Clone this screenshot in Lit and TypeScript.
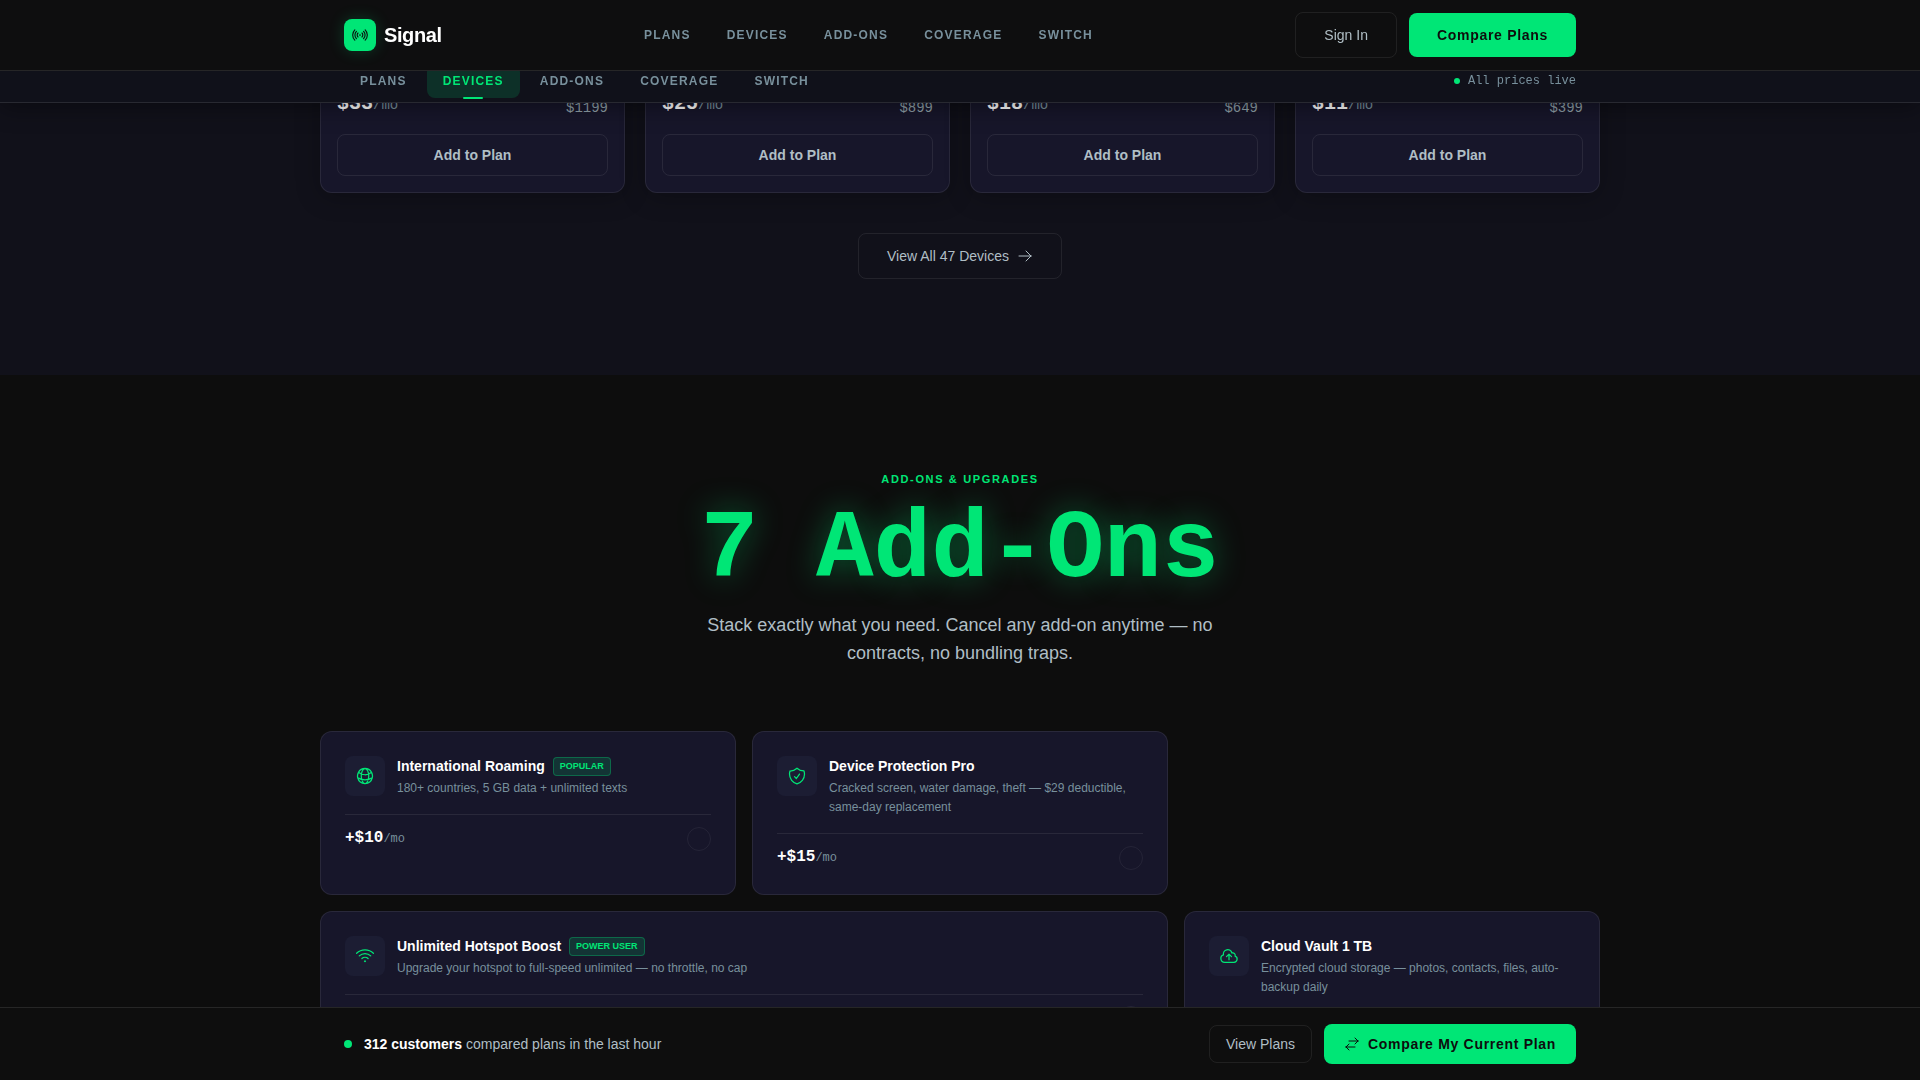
import { LitElement, html, css, svg, nothing } from "lit";
import { customElement, property, state } from "lit/decorators.js";
import { classMap } from "lit/directives/class-map.js";

const ICONS: Record<string, string> = {
  signal:
    "M9.348 14.652a3.75 3.75 0 010-5.304m5.304 0a3.75 3.75 0 010 5.304m-7.425 2.121a6.75 6.75 0 010-9.546m9.546 0a6.75 6.75 0 010 9.546M5.106 18.894c-3.808-3.807-3.808-9.98 0-13.788m13.788 0c3.808 3.807 3.808 9.98 0 13.788M12 12h.008v.008H12V12zm.375 0a.375.375 0 11-.75 0 .375.375 0 01.75 0z",
  arrow: "M13.5 4.5L21 12m0 0l-7.5 7.5M21 12H3",
  swap: "M7.5 21L3 16.5m0 0L7.5 12M3 16.5h13.5m0-13.5L21 7.5m0 0L16.5 12M21 7.5H7.5",
  globe:
    "M12 21a9.004 9.004 0 008.716-6.747M12 21a9.004 9.004 0 01-8.716-6.747M12 21c2.485 0 4.5-4.03 4.5-9S14.485 3 12 3m0 18c-2.485 0-4.5-4.03-4.5-9S9.515 3 12 3m0 0a8.997 8.997 0 017.843 4.582M12 3a8.997 8.997 0 00-7.843 4.582m15.686 0A11.953 11.953 0 0112 10.5c-2.998 0-5.74-1.1-7.843-2.918m15.686 0A8.959 8.959 0 0121 12c0 .778-.099 1.533-.284 2.253m0 0A17.919 17.919 0 0112 16.5c-3.162 0-6.133-.815-8.716-2.247m0 0A9.015 9.015 0 013 12c0-1.605.42-3.113 1.157-4.418",
  shield:
    "M9 12.75L11.25 15 15 9.75m-3-7.036A11.959 11.959 0 013.598 6 11.99 11.99 0 003 9.749c0 5.592 3.824 10.29 9 11.623 5.176-1.332 9-6.03 9-11.622 0-1.31-.21-2.571-.598-3.751h-.152c-3.196 0-6.1-1.248-8.25-3.285z",
  wifi:
    "M8.288 15.038a5.25 5.25 0 017.424 0M5.106 11.856c3.807-3.808 9.98-3.808 13.788 0M1.924 8.674c5.565-5.565 14.587-5.565 20.152 0M12.53 18.22l-.53.53-.53-.53a.75.75 0 011.06 0z",
  cloud:
    "M12 16.5V9.75m0 0l3 3m-3-3l-3 3M6.75 19.5a4.5 4.5 0 01-1.41-8.775 5.25 5.25 0 0110.233-2.33 3 3 0 013.758 3.848A3.752 3.752 0 0118 19.5H6.75z",
};

const icon = (name: string, size: number) => html`<svg
  width=${size}
  height=${size}
  viewBox="0 0 24 24"
  fill="none"
  stroke="currentColor"
  stroke-width="1.5"
  stroke-linecap="round"
  stroke-linejoin="round"
  aria-hidden="true"
>${svg`<path d=${ICONS[name]}></path>`}</svg>`;

const base = css`
  * {
    box-sizing: border-box;
    margin: 0;
  }
  svg {
    display: block;
    flex: none;
  }
  a {
    color: inherit;
    text-decoration: none;
  }
  button {
    font: inherit;
    cursor: pointer;
  }
  .mono {
    font-family: "Liberation Mono", monospace;
  }
  .btn {
    display: inline-flex;
    align-items: center;
    justify-content: center;
    gap: 8px;
    border-radius: 8px;
    font-size: 14px;
    line-height: 22px;
    white-space: nowrap;
  }
  .ghost {
    padding: 11px 28px;
    border: 1px solid rgba(255, 255, 255, 0.08);
    background: transparent;
    color: #b0bec5;
  }
  .primary {
    padding: 11px 28px;
    border: 0;
    background: #00e676;
    color: #0d0d0d;
    font-weight: 700;
    letter-spacing: 0.05em;
  }
`;

const SECTIONS = ["Plans", "Devices", "Add-Ons", "Coverage", "Switch"];

@customElement("device-card")
class DeviceCard extends LitElement {
  @property() monthly = "";
  @property() full = "";

  static styles = [
    base,
    css`
      :host {
        display: block;
      }
      .card {
        display: flex;
        flex-direction: column;
        gap: 13px;
        padding: 16px;
        border: 1px solid rgba(255, 255, 255, 0.08);
        border-radius: 12px;
        background: #17162a;
        box-shadow: 0 4px 24px rgba(0, 0, 0, 0.25);
      }
      .prices {
        display: flex;
        align-items: flex-end;
        justify-content: space-between;
      }
      .monthly {
        font-size: 20px;
        line-height: 32px;
        font-weight: 700;
        color: #fff;
      }
      .unit,
      .full {
        font-size: 14px;
        font-weight: 400;
        color: #78909c;
      }
      .full {
        line-height: 26px;
        color: #90a0a8;
      }
      .add {
        padding: 9px 16px;
        border: 1px solid rgba(255, 255, 255, 0.08);
        background: transparent;
        color: #b0bec5;
        font-weight: 700;
      }
    `,
  ];

  render() {
    return html`<article class="card">
      <div class="prices mono">
        <span class="monthly">${this.monthly}<span class="unit">/mo</span></span>
        <span class="full">${this.full}</span>
      </div>
      <button class="btn add">Add to Plan</button>
    </article>`;
  }
}

@customElement("addon-card")
class AddonCard extends LitElement {
  @property() icon = "";
  @property() name = "";
  @property() badge = "";
  @property() text = "";
  @property() price = "";

  static styles = [
    base,
    css`
      :host {
        display: block;
      }
      .card {
        height: 100%;
        padding: 24px;
        border: 1px solid rgba(255, 255, 255, 0.08);
        border-radius: 12px;
        background: #17162a;
      }
      .top {
        display: flex;
        gap: 12px;
        padding-bottom: 16px;
        border-bottom: 1px solid rgba(255, 255, 255, 0.08);
      }
      .tile {
        display: grid;
        place-items: center;
        flex: none;
        width: 40px;
        height: 40px;
        border-radius: 8px;
        background: #1c1d33;
        color: #00e676;
      }
      .head {
        display: flex;
        align-items: center;
        gap: 8px;
        padding-bottom: 3px;
      }
      .name {
        font-size: 14px;
        line-height: 20px;
        font-weight: 700;
        color: #fff;
      }
      .badge {
        padding: 1px 6px;
        border: 1px solid rgba(0, 230, 118, 0.3);
        border-radius: 4px;
        background: rgba(0, 230, 118, 0.15);
        color: #00e676;
        font-size: 9px;
        line-height: 15px;
        font-weight: 700;
        text-transform: uppercase;
      }
      .text {
        font-size: 12px;
        line-height: 19px;
        color: #78909c;
      }
      .foot {
        display: flex;
        align-items: center;
        justify-content: space-between;
        padding-top: 11px;
      }
      .price {
        font-size: 16px;
        line-height: 24px;
        font-weight: 700;
        color: #fff;
      }
      .unit {
        font-size: 12px;
        font-weight: 400;
        color: #78909c;
      }
      .pick {
        appearance: none;
        width: 24px;
        height: 24px;
        margin-left: auto;
        border: 1px solid rgba(255, 255, 255, 0.06);
        border-radius: 50%;
        cursor: pointer;
      }
      .pick:checked {
        background: #00e676;
      }
    `,
  ];

  render() {
    return html`<article class="card">
      <div class="top">
        <span class="tile">${icon(this.icon, 20)}</span>
        <div>
          <div class="head">
            <h3 class="name">${this.name}</h3>
            ${this.badge ? html`<span class="badge">${this.badge}</span>` : nothing}
          </div>
          <p class="text">${this.text}</p>
        </div>
      </div>
      <div class="foot">
        ${this.price
          ? html`<span class="price mono">${this.price}<span class="unit">/mo</span></span>`
          : nothing}
        <input class="pick" type="checkbox" aria-label=${this.name} />
      </div>
    </article>`;
  }
}

@customElement("app-root")
class AppRoot extends LitElement {
  @state() private active = "Devices";

  private devices = [
    { monthly: "$33", full: "$1199" },
    { monthly: "$25", full: "$899" },
    { monthly: "$18", full: "$649" },
    { monthly: "$11", full: "$399" },
  ];

  private addons = [
    {
      icon: "globe",
      name: "International Roaming",
      badge: "Popular",
      text: "180+ countries, 5 GB data + unlimited texts",
      price: "+$10",
    },
    {
      icon: "shield",
      name: "Device Protection Pro",
      text: "Cracked screen, water damage, theft — $29 deductible, same-day replacement",
      price: "+$15",
    },
    {
      icon: "wifi",
      name: "Unlimited Hotspot Boost",
      badge: "Power User",
      text: "Upgrade your hotspot to full-speed unlimited — no throttle, no cap",
      wide: true,
    },
    {
      icon: "cloud",
      name: "Cloud Vault 1 TB",
      text: "Encrypted cloud storage — photos, contacts, files, auto-backup daily",
    },
  ];

  static styles = [
    base,
    css`
      :host {
        display: block;
        min-height: 100vh;
        background: #0d0d0d;
        color: #b0bec5;
        font-family: "Liberation Sans", Arial, sans-serif;
        font-size: 14px;
        line-height: 22px;
      }
      .wrap {
        max-width: 1280px;
        margin: 0 auto;
      }
      .bar {
        display: flex;
        align-items: center;
        justify-content: space-between;
        padding: 0 24px;
      }
      .header {
        position: fixed;
        inset: 0 0 auto;
        z-index: 3;
        padding: 12px 0;
        border-bottom: 1px solid rgba(255, 255, 255, 0.1);
        background: #0e0e0f;
      }
      .brand {
        display: flex;
        align-items: center;
        gap: 8px;
        color: #fff;
        font-size: 20px;
        line-height: 32px;
        font-weight: 700;
        letter-spacing: -0.02em;
      }
      .logo {
        display: grid;
        place-items: center;
        width: 32px;
        height: 32px;
        border-radius: 8px;
        background: #00e676;
        color: #0d0d0d;
        box-shadow: 0 0 16px rgba(0, 230, 118, 0.2);
      }
      .links,
      .tabs {
        display: flex;
        font-size: 12px;
        line-height: 20px;
        font-weight: 700;
        letter-spacing: 0.1em;
        text-transform: uppercase;
        color: #78909c;
      }
      .links {
        gap: 36px;
      }
      .actions {
        display: flex;
        align-items: center;
        gap: 12px;
      }
      .subnav {
        position: fixed;
        inset: 59px 0 auto;
        z-index: 2;
        padding: 5px 0 4px;
        border-bottom: 1px solid rgba(255, 255, 255, 0.1);
        background: #10111a;
        box-shadow: 0 4px 24px rgba(0, 0, 0, 0.4);
      }
      .tabs {
        gap: 4px;
      }
      .tab {
        position: relative;
        padding: 7px 16px;
        border-radius: 8px;
      }
      .tab.on {
        background: rgba(0, 230, 118, 0.15);
        color: #00e676;
      }
      .tab.on::after {
        content: "";
        position: absolute;
        left: 50%;
        bottom: -1px;
        width: 20px;
        height: 2px;
        margin-left: -10px;
        border-radius: 1px;
        background: #00e676;
      }
      .live {
        display: flex;
        align-items: center;
        gap: 8px;
        font-size: 12px;
        line-height: 20px;
        color: #78909c;
      }
      .dot {
        width: 8px;
        height: 8px;
        border-radius: 50%;
        background: #00e676;
      }
      .dot.small {
        width: 6px;
        height: 6px;
      }
      .devices {
        padding: 71px 24px 96px;
        background: #11111a;
      }
      .device-grid {
        display: grid;
        grid-template-columns: repeat(4, 1fr);
        gap: 20px;
      }
      .more {
        display: flex;
        justify-content: center;
        padding-top: 40px;
      }
      .addons {
        padding: 96px 24px 0;
      }
      .intro {
        display: flex;
        flex-direction: column;
        align-items: center;
        padding-bottom: 64px;
        text-align: center;
      }
      .eyebrow {
        font-size: 11px;
        line-height: 16px;
        font-weight: 700;
        letter-spacing: 0.15em;
        text-transform: uppercase;
        color: #00e676;
      }
      .title {
        padding: 16px 0 12px;
        font-size: 96px;
        line-height: 96px;
        font-weight: 700;
        color: #00e676;
        text-shadow: 0 0 32px rgba(0, 230, 118, 0.4);
      }
      .lead {
        max-width: 520px;
        font-size: 18px;
        line-height: 28px;
      }
      .addon-grid {
        display: grid;
        grid-template-columns: repeat(3, 1fr);
        gap: 16px;
      }
      .wide {
        grid-column: span 2;
      }
      .cta {
        position: fixed;
        inset: auto 0 0;
        z-index: 3;
        padding: 16px 0;
        border-top: 1px solid rgba(255, 255, 255, 0.1);
        background: #0e0e0e;
      }
      .note {
        display: flex;
        align-items: center;
        gap: 12px;
      }
      .note strong {
        color: #fff;
      }
      .cta .ghost {
        padding: 7px 16px;
      }
      .cta .primary {
        padding: 9px 20px;
      }
    `,
  ];

  render() {
    return html`
      <header class="header">
        <div class="wrap bar">
          <a class="brand" href="#"><span class="logo">${icon("signal", 18)}</span>Signal</a>
          <nav class="links" aria-label="Main">
            ${SECTIONS.map((s) => html`<a href="#${s.toLowerCase()}">${s}</a>`)}
          </nav>
          <div class="actions">
            <button class="btn ghost">Sign In</button>
            <button class="btn primary">Compare Plans</button>
          </div>
        </div>
      </header>
      <div class="subnav">
        <div class="wrap bar">
          <nav class="tabs" aria-label="Sections">
            ${SECTIONS.map(
              (s) => html`<a
                class=${classMap({ tab: true, on: s === this.active })}
                href="#${s.toLowerCase()}"
                @click=${() => (this.active = s)}
                >${s}</a
              >`,
            )}
          </nav>
          <span class="live mono"><span class="dot small"></span>All prices live</span>
        </div>
      </div>
      <main>
        <section class="devices" id="devices">
          <div class="wrap">
            <div class="device-grid">
              ${this.devices.map(
                (d) => html`<device-card .monthly=${d.monthly} .full=${d.full}></device-card>`,
              )}
            </div>
            <div class="more">
              <a class="btn ghost" href="#all-devices">View All 47 Devices ${icon("arrow", 16)}</a>
            </div>
          </div>
        </section>
        <section class="addons" id="add-ons">
          <div class="wrap">
            <div class="intro">
              <p class="eyebrow">Add-Ons &amp; Upgrades</p>
              <h2 class="title mono">7 Add-Ons</h2>
              <p class="lead">
                Stack exactly what you need. Cancel any add-on anytime — no contracts, no bundling
                traps.
              </p>
            </div>
            <div class="addon-grid">
              ${this.addons.map(
                (a) => html`<addon-card
                  class=${classMap({ wide: !!a.wide })}
                  .icon=${a.icon}
                  .name=${a.name}
                  .badge=${a.badge ?? ""}
                  .text=${a.text}
                  .price=${a.price ?? ""}
                ></addon-card>`,
              )}
            </div>
          </div>
        </section>
      </main>
      <aside class="cta">
        <div class="wrap bar">
          <p class="note">
            <span class="dot"></span>
            <span><strong>312 customers</strong> compared plans in the last hour</span>
          </p>
          <div class="actions">
            <button class="btn ghost">View Plans</button>
            <button class="btn primary">${icon("swap", 16)}Compare My Current Plan</button>
          </div>
        </div>
      </aside>
    `;
  }
}
